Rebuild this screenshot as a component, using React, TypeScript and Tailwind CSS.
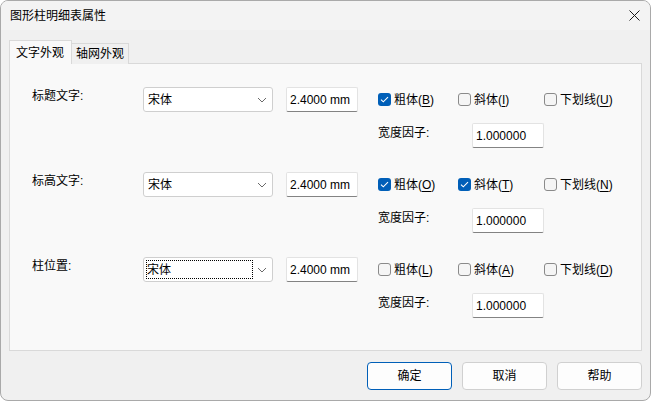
import React from "react";

type Check = { label: string; mnemonic: string; checked: boolean };

type Row = {
  title: string;
  focused?: boolean;
  checks: Check[];
};

const ROWS: Row[] = [
  {
    title: "标题文字:",
    checks: [
      { label: "粗体", mnemonic: "B", checked: true },
      { label: "斜体", mnemonic: "I", checked: false },
      { label: "下划线", mnemonic: "U", checked: false },
    ],
  },
  {
    title: "标高文字:",
    checks: [
      { label: "粗体", mnemonic: "O", checked: true },
      { label: "斜体", mnemonic: "T", checked: true },
      { label: "下划线", mnemonic: "N", checked: false },
    ],
  },
  {
    title: "柱位置:",
    focused: true,
    checks: [
      { label: "粗体", mnemonic: "L", checked: false },
      { label: "斜体", mnemonic: "A", checked: false },
      { label: "下划线", mnemonic: "D", checked: false },
    ],
  },
];

const CHECK_WIDTHS = ["w-[80px]", "w-[86px]", "w-[90px]"];

function CheckBox({ label, mnemonic, checked }: Check) {
  return (
    <div className="flex items-center gap-[3px]">
      {checked ? (
        <span className="flex h-[13px] w-[13px] items-center justify-center rounded-[3px] bg-[#005fb8]">
          <svg width="9" height="7" viewBox="0 0 9 7" fill="none">
            <path d="M1 3.6 L3.3 5.8 L8 1.2" stroke="white" strokeWidth="1.1" />
          </svg>
        </span>
      ) : (
        <span className="h-[13px] w-[13px] rounded-[3px] border border-[#8a8a8a] bg-[#f5f5f5]" />
      )}
      <span>
        {label}(<u className="underline-offset-2">{mnemonic}</u>)
      </span>
    </div>
  );
}

function TextField({ value, width }: { value: string; width: string }) {
  return (
    <div
      className={`${width} flex h-[25px] items-center rounded-[2px] border border-[#e3e3e3] border-b-[#838383] bg-white pl-[3px]`}
    >
      {value}
    </div>
  );
}

function PropertyRow({ row }: { row: Row }) {
  return (
    <div className="flex">
      <div className="w-[111px]">{row.title}</div>
      <div className="flex h-[25px] w-[130px] items-center justify-between rounded-[3px] border border-[#cfcfcf] bg-white pr-[2px] pl-[2px]">
        {row.focused ? (
          <span className="flex h-[19px] w-[107px] items-center border border-dotted border-black">
            宋体
          </span>
        ) : (
          <span className="pl-[2px]">宋体</span>
        )}
        <svg width="10" height="6" viewBox="0 0 10 6" fill="none" className="mr-[3px]">
          <path d="M1 1 L5 5 L9 1" stroke="#6a6a6a" strokeWidth="1" />
        </svg>
      </div>
      <div className="ml-[13px]">
        <TextField value="2.4000 mm" width="w-[72px]" />
      </div>
      <div className="ml-[20px] flex flex-col">
        <div className="flex h-[25px] items-center">
          {row.checks.map((check, i) => (
            <div key={check.mnemonic} className={CHECK_WIDTHS[i]}>
              <CheckBox {...check} />
            </div>
          ))}
        </div>
        <div className="mt-[11px] flex">
          <div className="w-[94px] pt-[1px]">宽度因子:</div>
          <TextField value="1.000000" width="w-[72px]" />
        </div>
      </div>
    </div>
  );
}

export default function App() {
  return (
    <div className="flex h-[401px] w-[651px] flex-col overflow-hidden rounded-[8px] border border-[#a9a9a9] bg-[#f0f0f0] font-['Liberation_Sans','Noto_Sans_CJK_SC',sans-serif] text-[12px] text-black">
      <div className="flex h-[29px] items-center justify-between bg-[#f3f3f3] pr-[10px] pl-[9px]">
        <span>图形柱明细表属性</span>
        <svg width="11" height="11" viewBox="0 0 11 11" fill="none">
          <path d="M0.5 0.5 L10.5 10.5 M10.5 0.5 L0.5 10.5" stroke="#1a1a1a" strokeWidth="1" />
        </svg>
      </div>

      <div className="flex flex-1 flex-col px-[8px] pt-[10px]">
        <div className="relative z-10 -mb-px flex h-[24px] items-end">
          <div className="flex h-[24px] w-[63px] items-center border border-b-0 border-[#d9d9d9] bg-[#f9f9f9] pl-[6px]">
            文字外观
          </div>
          <div className="flex h-[21px] w-[57px] items-center border border-b-0 border-l-0 border-[#d9d9d9] bg-[#f0f0f0] pl-[4px]">
            轴网外观
          </div>
        </div>

        <div className="flex h-[288px] flex-col gap-[24px] border border-[#d9d9d9] bg-[#f9f9f9] pt-[23px] pl-[22px]">
          {ROWS.map((row) => (
            <PropertyRow key={row.title} row={row} />
          ))}
        </div>

        <div className="mt-[11px] flex justify-end gap-[10px]">
          <button className="h-[28px] w-[85px] rounded-[4px] border border-[#005fb8] bg-[#fdfdfd]">
            确定
          </button>
          <button className="h-[28px] w-[85px] rounded-[4px] border border-[#d0d0d0] bg-[#fdfdfd]">
            取消
          </button>
          <button className="h-[28px] w-[85px] rounded-[4px] border border-[#d0d0d0] bg-[#fdfdfd]">
            帮助
          </button>
        </div>
      </div>
    </div>
  );
}
